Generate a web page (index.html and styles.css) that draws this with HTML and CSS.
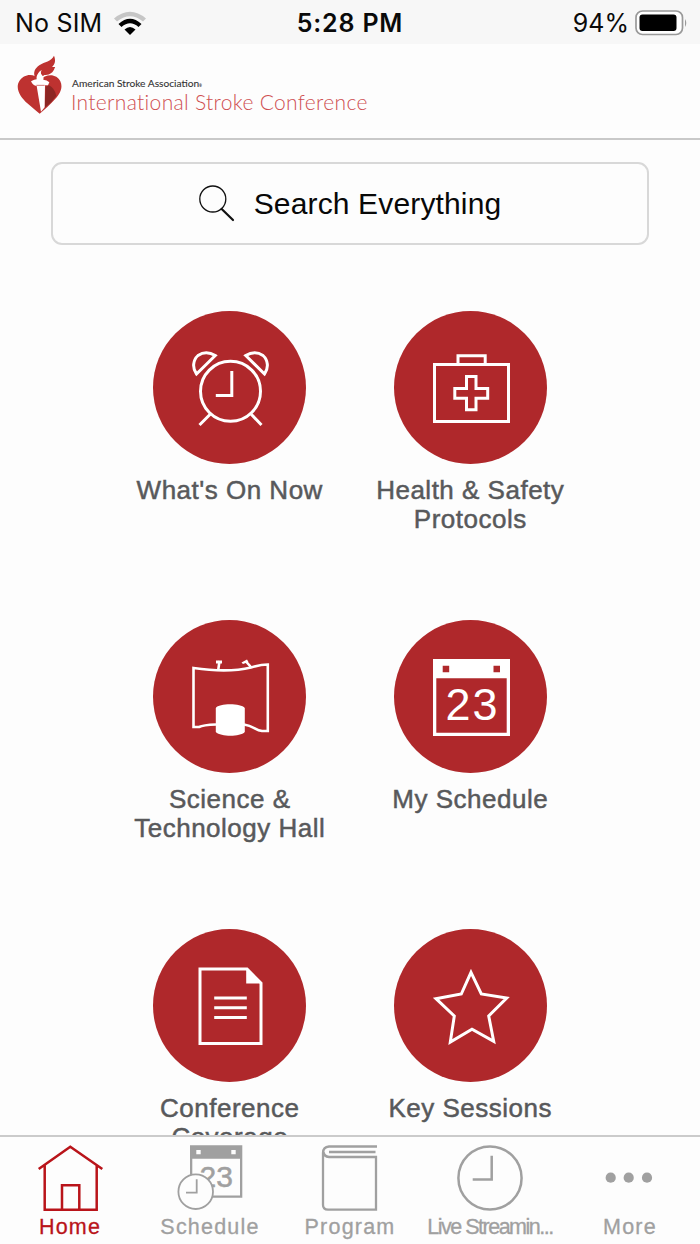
FILE: index.html
```html
<!DOCTYPE html>
<html lang="en">
<head>
<meta charset="utf-8">
<title>International Stroke Conference</title>
<link rel="stylesheet" href="styles.css">
</head>
<body>
<div class="app">
  <div class="status">
    <div class="carrier"><span class="sim">No SIM</span>
      <svg class="wifi" width="34" height="26" viewBox="0 0 34 26"><path d="M1 8.500Q17-5 33 8.500L30 11.500Q17 1 4 11.500Z" fill="#c6c6c6"/><path d="M5.500 14Q17 3.500 28.500 14L25.500 17Q17 9.500 8.500 17Z"/><path d="M11.500 19.500Q17 14.500 22.500 19.500L17 25Z"/></svg>
    </div>
    <span class="time">5:28 PM</span>
    <div class="power"><span class="percent">94%</span>
      <svg class="battery" width="53" height="26" viewBox="0 0 53 26"><rect x="1" y="1" width="46.500" height="23.500" rx="6.500" fill="#fff" stroke="#999" stroke-width="1.700"/><rect x="4.500" y="4.500" width="37" height="16.500" rx="3"/><path d="M50 9Q52.500 13 50 17Z" fill="#999"/></svg>
    </div>
  </div>
  <header class="header">
    <svg class="logo" width="46" height="60" viewBox="51 30 138 180">
      <path d="M119 105C102 82 71 87 58 108C44 131 63 158 81 174C96 187 107 197 119 206C134 194 149 180 162 166C177 150 191 130 181 109C171 86 139 84 119 105Z" fill="#be3230"/>
      <path d="M137 125L147 121Q164 130 169 152Q156 172 134 189Z" fill="#8c2623"/>
      <path d="M105 96C99 83 104 70 119 60C134 50 153 50 162 32C168 47 165 57 156 66C167 65 166 67 164 69C159 83 151 89 137 90C133 89 130 91 128 95C121 89 120 82 125 76C115 80 111 89 114 101Z" fill="#be3230"/>
      <path d="M93 109Q104 103 110 103Q108 92 116 85Q126 79 124 76Q119 86 129 94Q132 98 130 104Q141 104 148 112L144 121H135L134 187L123 200L110 123Q98 121 93 109Z" fill="#fff"/>
      <path d="M109 121H134" stroke="#be3230" stroke-width="2"/>
    </svg>
    <div class="brand"><span class="brand-org">American Stroke Association<span class="dot">®</span></span><span class="brand-name">International Stroke Conference</span></div>
  </header>
  <main class="content">
    <div class="search">
      <svg width="36" height="37" viewBox="0 0 36 37" fill="none" stroke="#111"><circle cx="13.800" cy="14" r="13" stroke-width="1.300"/><path d="M22.700 24L34 35" stroke-width="2.200" stroke-linecap="round"/></svg>
      <span class="search-text">Search Everything</span>
    </div>
    <div class="grid">
      <div class="tile"><svg class="disc" viewBox="0 0 153 153"><g class="line"><circle cx="77.500" cy="80.300" r="30"/><path d="M78.800 60V84.500H62.800M57.200 103.300L46.500 114M98.200 103.300L108.500 114"/><path d="M62.300 44.500L43.500 63C39 57 40 49 45 44.500Q53 39 62.300 44.500ZM92.700 44.500L111.500 63C116 57 115 49 110 44.500Q102 39 92.700 44.500Z"/></g></svg><span class="label">What's On Now</span></div>
      <div class="tile"><svg class="disc" viewBox="0 0 153 153"><g class="line"><path d="M40.500 53.500H114.500V110.500H40.500ZM64 53V44.800H91.200V53"/><path d="M72.500 65.500H82V77.500H93.700V87.200H82V98.700H72.500V87.200H60.800V77.500H72.500Z"/></g></svg><span class="label">Health &amp; Safety<br>Protocols</span></div>
      <div class="tile"><svg class="disc" viewBox="0 0 153 153"><g class="line thin"><path d="M63 104.500Q50 105 46 107H40.500V48Q75 53 98 47.500C106 45 108 44.500 114.800 44.500V111H109C102 110 101 106 91 104.500M65.300 49.500L66.500 41M97.500 46.500L92.500 41"/></g><path d="M62.800 88C66 83 88 83 91.800 88V112C87 117 68 117 62.800 112ZM63 40.500H69V43.500H63ZM88.500 42.500L94 39.500L95.500 42L90 44Z" fill="#fff"/></svg><span class="label">Science &amp;<br>Technology Hall</span></div>
      <div class="tile"><svg class="disc" viewBox="0 0 153 153"><path fill="#fff" fill-rule="evenodd" d="M39 39H116V116H39ZM42.300 58.300H112.700V112.700H42.300ZM48.700 45.700H55.200V52.300H48.700ZM99.500 45.700H106V52.300H99.500Z"/><text class="day" x="51.500" y="99.700">23</text></svg><span class="label">My Schedule</span></div>
      <div class="tile"><svg class="disc" viewBox="0 0 153 153"><g class="line"><path d="M47 40H94L108 54V114.500H47Z"/><path d="M61.200 69H93.800M61.200 78.800H93.800M61.200 88.600H93.800"/></g><path d="M93.200 39V54.500H109Z" fill="#fff"/></svg><span class="label">Conference<br>Coverage</span></div>
      <div class="tile"><svg class="disc" viewBox="0 0 153 153"><path class="line" d="M77 43.300L87.300 65L112.700 69L94.700 87L99.700 112.300L78 100.300L56.300 113L60.300 87L42 69.700L67.300 65Z"/></svg><span class="label">Key Sessions</span></div>
    </div>
  </main>
  <nav class="tabs">
    <div class="tab active"><svg width="140" height="76" viewBox="0 0 140 76" fill="none" stroke="#b9141a" stroke-width="2.500"><path d="M38.700 32L70.300 9.700L102.300 32M44.700 28.500V72.700H96.700V28.500M62 72V48.300H79.300V72"/></svg><span>Home</span></div>
    <div class="tab"><svg width="140" height="76" viewBox="0 0 140 76"><path fill="#a0a0a0" fill-rule="evenodd" d="M50 8.300H102.300V60.700H50ZM52.300 21.700H100V58.400H52.300ZM56.300 13H60.700V17.300H56.300ZM91.300 13H95.700V17.300H91.300Z"/><text class="mini-day" x="59.500" y="49.700">23</text><g stroke="#a0a0a0" stroke-width="1.800"><circle cx="55.700" cy="54.700" r="17.300" fill="#fdfdfd"/><path d="M56.700 42.300V55.700H46" fill="none"/></g></svg><span>Schedule</span></div>
    <div class="tab"><svg width="140" height="76" viewBox="0 0 140 76" fill="none" stroke="#a0a0a0" stroke-width="2.300"><path d="M97 9.500H49Q43 10 43 16V68Q43 72.500 48 72.700H96V20H49Q44 19.500 43.500 15M49 15H95.500"/></svg><span>Program</span></div>
    <div class="tab streaming"><svg width="140" height="76" viewBox="0 0 140 76" fill="none" stroke="#a0a0a0" stroke-width="2.500"><circle cx="70" cy="41" r="31.600"/><path d="M71.700 18.700V42.500H52.700"/></svg><span>Live Streamin...</span></div>
    <div class="tab"><svg width="140" height="76" viewBox="0 0 140 76" fill="#a0a0a0"><circle cx="50.700" cy="40.700" r="5.100"/><circle cx="68.700" cy="40.700" r="5.100"/><circle cx="87" cy="40.700" r="5.100"/></svg><span>More</span></div>
  </nav>
</div>
</body>
</html>
```
FILE: styles.css
```css
* { box-sizing: border-box; }
body { margin: 0; font-family: "Liberation Sans", Arial, sans-serif; background: #fdfdfd; }
svg { display: block; flex: none; }
.app { width: 700px; height: 1244px; display: flex; flex-direction: column; overflow: hidden; }
.status { height: 44px; flex: none; display: grid; grid-template-columns: 1fr auto 1fr; align-items: center; padding: 2px 12px 0 15px; background: #f7f7f7; font: 25px/30px Inter, sans-serif; color: #0a0a0a; }
.carrier, .power { display: flex; align-items: center; }
.carrier { gap: 11px; }
.power { justify-content: flex-end; gap: 6px; }
.sim { letter-spacing: 0.2px; }
.time { font-weight: 600; letter-spacing: 0.8px; margin-right: 3px; }
.header { height: 96px; flex: none; display: flex; gap: 8px; padding: 11px 17px 0; border-bottom: 2px solid #c9c9c9; background: #fdfdfd; }
.brand { display: flex; flex-direction: column; padding-top: 22px; white-space: nowrap; }
.brand-org { font: 10.2px/13px Lato, sans-serif; color: #333; padding-left: 1px; -webkit-text-stroke: 0.1px #333; }
.dot { font-size: 3px; }
.brand-name { font: 300 21px/22px Lato, sans-serif; color: #cf4f51; letter-spacing: 0.32px; margin-top: -2px; }
.content { flex: 1; min-height: 0; overflow: hidden; padding: 22px 51px 0; }
.search { height: 83px; border: 2px solid #d8d8d8; border-radius: 11px; display: flex; align-items: center; justify-content: center; gap: 19px; }
.search-text { font-size: 30px; line-height: 36px; color: #080808; letter-spacing: 0.15px; white-space: nowrap; }
.grid { display: grid; grid-template-columns: 240.5px 240.5px; justify-content: center; grid-auto-rows: 309px; padding-top: 66px; }
.tile { display: flex; flex-direction: column; align-items: center; }
.disc { width: 153px; height: 153px; border-radius: 50%; background: #af282b; }
.line { fill: none; stroke: #fff; stroke-width: 3; }
.thin { stroke-width: 2.6; }
.day { font-size: 45px; fill: #fff; letter-spacing: 2px; }
.label { margin-top: 12px; font-size: 26px; line-height: 28.500px; color: #58595b; letter-spacing: 0.5px; -webkit-text-stroke: 0.5px #58595b; text-align: center; white-space: nowrap; }
.tabs { height: 109px; flex: none; display: grid; grid-template-columns: repeat(5, 140px); border-top: 2px solid #cbcbcb; background: #fdfdfd; }
.tab { display: flex; flex-direction: column; align-items: center; font-size: 21.5px; line-height: 28px; color: #a0a0a0; letter-spacing: 1.2px; white-space: nowrap; -webkit-text-stroke: 0.3px; }
.active { color: #b9141a; }
.mini-day { font-size: 30px; fill: #a0a0a0; letter-spacing: 0; stroke: #a0a0a0; stroke-width: 0.5px; }
.streaming span { letter-spacing: -1.5px; }
```
